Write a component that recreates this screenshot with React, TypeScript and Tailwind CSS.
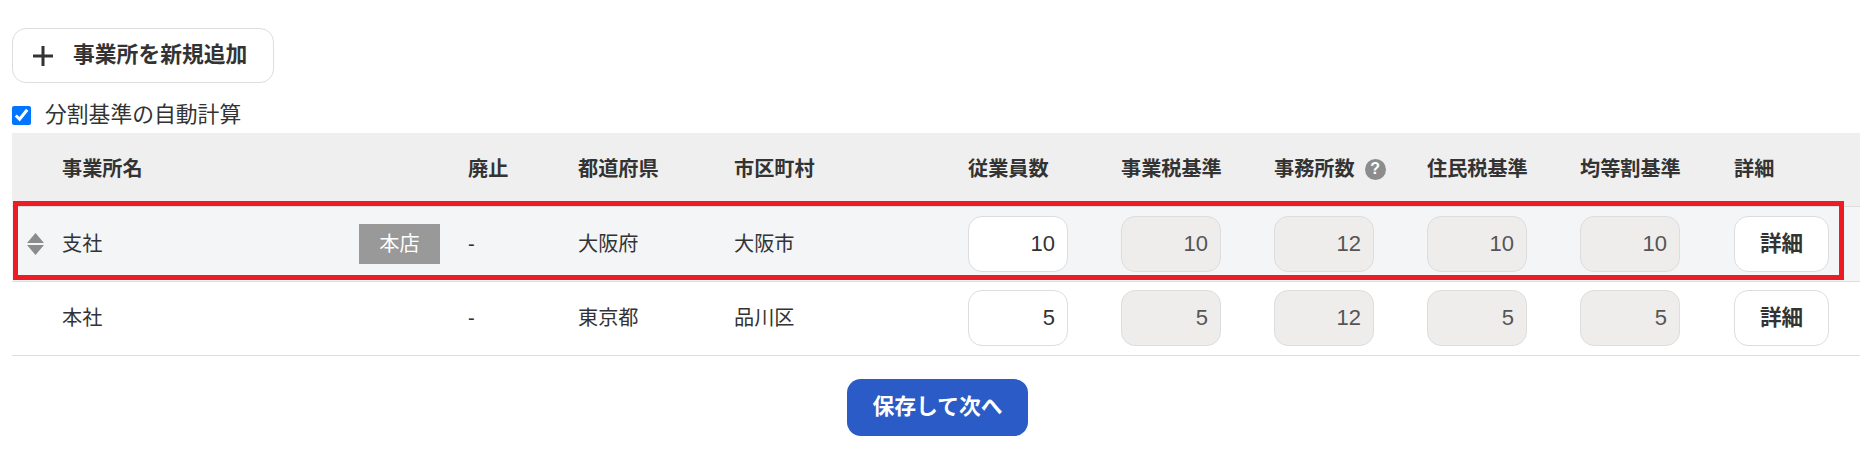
const rowGrid =
  "grid grid-cols-[50px_406px_110px_156px_234px_153px_153px_153px_153px_154px_126px] items-center";

const rows = [
  { name: "支社", head: true, pref: "大阪府", city: "大阪市", staff: "10", tax: "10", offices: "12", resident: "10", equal: "10" },
  { name: "本社", head: false, pref: "東京都", city: "品川区", staff: "5", tax: "5", offices: "12", resident: "5", equal: "5" },
];

function NumberBox({ value, disabled }: { value: string; disabled?: boolean }) {
  return (
    <input
      readOnly
      value={value}
      className={
        "block w-[100px] h-[56px] rounded-[14px] border border-[#dddddd] pr-[12px] text-right text-[22px] outline-none " +
        (disabled ? "bg-[#eeedec] text-[#555555]" : "bg-white text-[#333333]")
      }
    />
  );
}

export default function App() {
  return (
    <div className="h-[467px] w-[1860px] overflow-hidden bg-white pl-[12px] pt-[28px] font-['Liberation_Sans','Noto_Sans_CJK_JP',sans-serif] text-[#333333]">
      <button className="flex h-[55px] w-[262px] items-center rounded-[14px] border border-[#dddddd] bg-white pl-[20px] text-[21.8px] font-bold">
        <svg width="20" height="20" viewBox="0 0 20 20" className="mr-[20px]">
          <path d="M10 0v20M0 10h20" stroke="#333333" strokeWidth="3" fill="none" />
        </svg>
        事業所を新規追加
      </button>

      <label className="mt-[14px] flex h-[36px] items-center text-[21.8px]">
        <input type="checkbox" defaultChecked className="m-0 h-[19px] w-[19px] accent-[#0075ff]" />
        <span className="ml-[14px]">分割基準の自動計算</span>
      </label>

      <div className={rowGrid + " h-[74px] border-b border-[#dddddd] bg-[#efefef] text-[20.16px] font-bold"}>
        <div />
        <div>事業所名</div>
        <div>廃止</div>
        <div>都道府県</div>
        <div>市区町村</div>
        <div>従業員数</div>
        <div>事業税基準</div>
        <div className="flex items-center">
          事務所数
          <span className="ml-[10px] flex h-[21px] w-[21px] items-center justify-center rounded-full bg-[#8c8c8c] text-[16px] text-white">?</span>
        </div>
        <div>住民税基準</div>
        <div>均等割基準</div>
        <div>詳細</div>
      </div>

      {rows.map((row) => (
        <div
          key={row.name}
          className={
            rowGrid +
            " relative border-b border-[#dddddd] text-[20.16px] " +
            (row.head ? "h-[75px] bg-[#f4f5f7]" : "h-[74px] bg-white pb-[1px]")
          }
        >
          <div className="flex pl-[15px]">
            {row.head && (
              <svg width="17" height="22" viewBox="0 0 17 22" fill="#8c8c8c">
                <path d="M8.5 0L17 10H0z" />
                <path d="M0 12h17L8.5 22z" />
              </svg>
            )}
          </div>
          <div className="flex items-center justify-between pr-[28px]">
            <span>{row.name}</span>
            {row.head && (
              <span className="flex h-[40px] w-[81px] items-center justify-center bg-[#999999] text-white">本店</span>
            )}
          </div>
          <div>-</div>
          <div>{row.pref}</div>
          <div>{row.city}</div>
          <NumberBox value={row.staff} />
          <NumberBox value={row.tax} disabled />
          <NumberBox value={row.offices} disabled />
          <NumberBox value={row.resident} disabled />
          <NumberBox value={row.equal} disabled />
          <button className="h-[56px] w-[95px] rounded-[14px] border border-[#dddddd] bg-white text-[21.6px] font-bold">詳細</button>
          {row.head && (
            <div className="pointer-events-none absolute left-[1px] top-[-6px] h-[79px] w-[1831px] border-[5px] border-[#ed1c24]" />
          )}
        </div>
      ))}

      <div className="mt-[23px] flex justify-center pl-[3px]">
        <button className="h-[57px] w-[181px] rounded-[14px] bg-[#2a5bc7] text-[21.8px] font-bold text-white">保存して次へ</button>
      </div>
    </div>
  );
}
